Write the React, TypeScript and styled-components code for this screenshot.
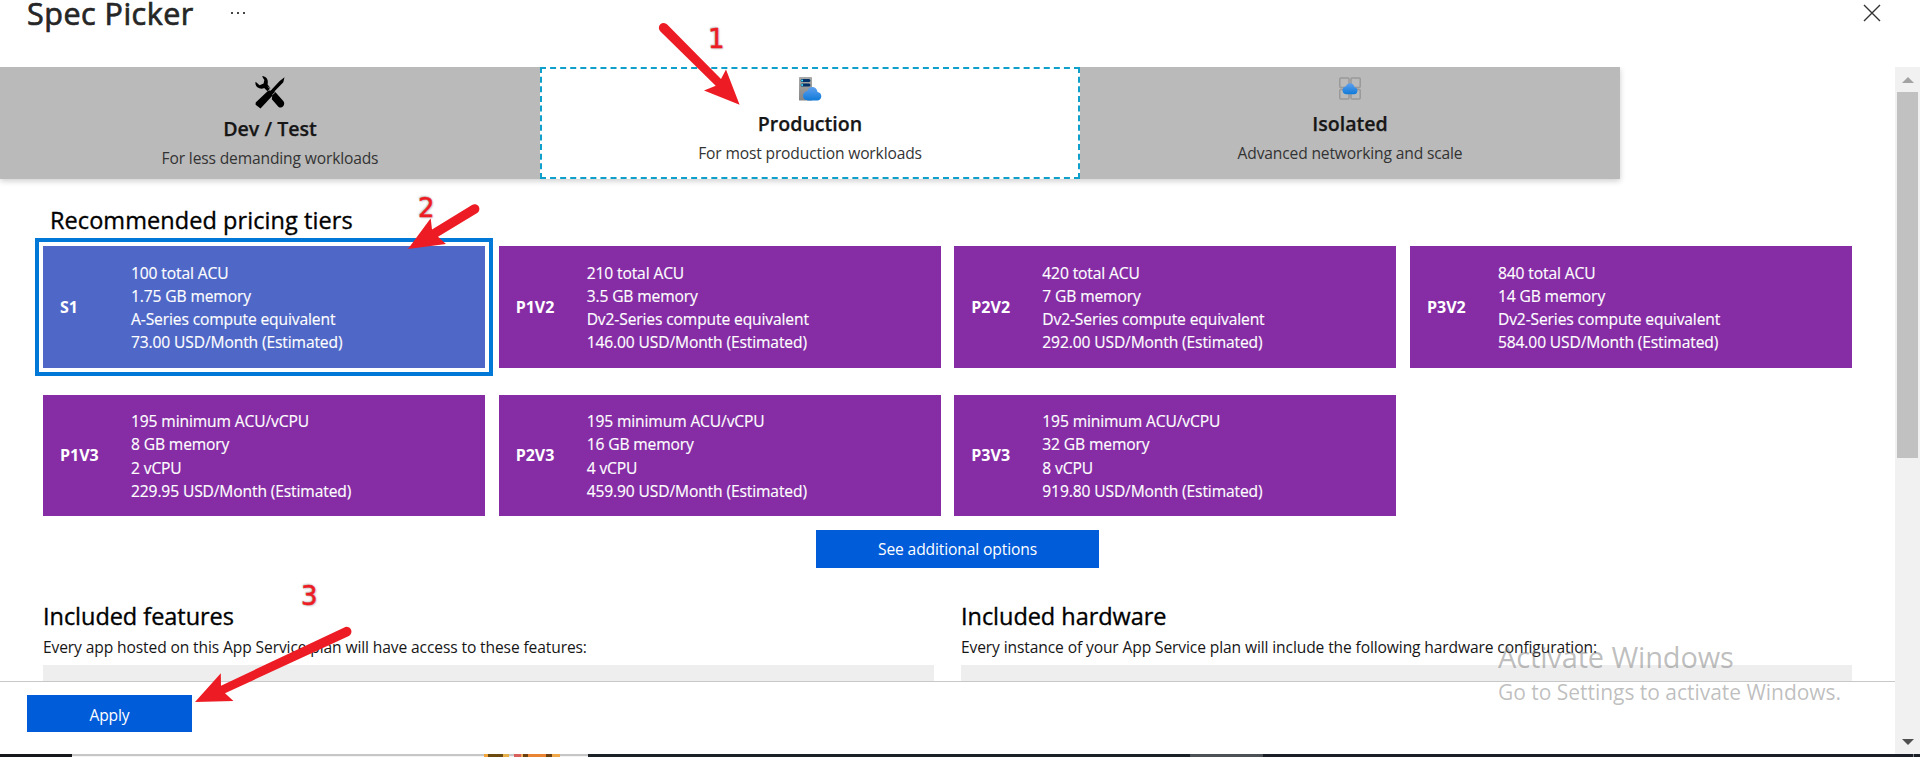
import React from 'react';
import styled, { createGlobalStyle } from 'styled-components';

const GlobalStyle = createGlobalStyle`
  * { box-sizing: border-box; }
  body {
    margin: 0;
    overflow: hidden;
    background: #fff;
    color: #161616;
    font-family: "Open Sans", "Noto Sans", sans-serif;
    font-size: 15.6px;
    letter-spacing: -0.12px;
  }
`;

const Page = styled.div`
  position: relative;
  display: flex;
  flex-direction: column;
  width: 1920px;
  height: 757px;
  overflow: hidden;
`;

const Header = styled.header`
  flex: none;
  display: flex;
  height: 67px;
  padding: 0 39px 0 27px;
`;

const Title = styled.h1`
  width: 167px;
  margin: -8px 0 0;
  white-space: nowrap;
  font-size: 30.5px;
  line-height: 42px;
  font-weight: 400;
  letter-spacing: 0.5px;
  -webkit-text-stroke: 0.7px #262626;
  color: #262626;
`;

const MoreDots = styled.svg`
  width: 15px;
  height: 2px;
  margin: 12px auto 0 36px;
  fill: #444;
`;

const CloseIcon = styled.svg`
  width: 18px;
  height: 18px;
  margin-top: 4px;
  stroke: #333;
  stroke-width: 1.4;
`;

const Body = styled.div`
  display: flex;
  flex: none;
  height: 687px;
`;

const Blade = styled.div`
  display: flex;
  flex-direction: column;
  width: 1895px;
`;

const Content = styled.main`
  flex: 1;
  min-height: 0;
  overflow: hidden;
`;

const Tabs = styled.div`
  display: grid;
  grid-template-columns: repeat(3, 540px);
  width: 1620px;
  height: 112px;
  box-shadow: 0 2px 6px rgba(0, 0, 0, 0.2);
`;

const Tab = styled.div<{ $active?: boolean }>`
  display: flex;
  flex-direction: column;
  align-items: center;
  padding-top: ${p => (p.$active ? 6 : 8)}px;
  background: ${p => (p.$active ? '#fff' : '#bababa')};
  border: ${p => (p.$active ? '2px dashed #0f9fcb' : 'none')};
`;

const TabIcon = styled.svg<{ $w: number; $h: number }>`
  flex: none;
  width: ${p => p.$w}px;
  height: ${p => p.$h}px;
  margin-bottom: 5px;
`;

const TabTitle = styled.div`
  font-size: 19.6px;
  line-height: 30px;
  font-weight: 600;
  letter-spacing: 0;
  -webkit-text-stroke: 0.25px #161616;
`;

const TabNote = styled.div`
  margin-top: 4px;
  line-height: 20px;
  letter-spacing: -0.15px;
  color: #333;
`;

const Heading = styled.h2<{ $indent?: boolean }>`
  margin: ${p => (p.$indent ? '25px 0 10px 50px' : '0')};
  font-size: 23.5px;
  line-height: 32px;
  font-weight: 400;
  letter-spacing: ${p => (p.$indent ? '0.07px' : '-0.04px')};
  -webkit-text-stroke: 0.35px #000;
  color: #000;
`;

const TierGrid = styled.div`
  display: grid;
  grid-template-columns: repeat(4, 442px);
  grid-template-rows: 122px 121px;
  justify-content: space-between;
  row-gap: 27px;
  margin: 0 43px;
`;

const TierCard = styled.div<{ $selected?: boolean }>`
  display: grid;
  grid-template-columns: 71px 1fr;
  align-items: center;
  padding-left: 17px;
  color: #fff;
  background: ${p => (p.$selected ? '#4f68c8' : '#862da6')};
  box-shadow: ${p => (p.$selected ? '0 0 0 4px #fff, 0 0 0 8px #0078d7' : 'none')};
`;

const TierName = styled.div`
  padding-bottom: 1px;
  font-size: 16px;
  font-weight: 700;
  letter-spacing: 0;
`;

const TierSpecs = styled.div`
  padding-top: 2px;
  line-height: 23.2px;
  -webkit-text-stroke: 0.15px #fff;
`;

const Button = styled.button`
  display: block;
  padding: 0;
  border: 0;
  background: #015cda;
  color: #fff;
  font: inherit;
  letter-spacing: inherit;
`;

const OptionsButton = styled(Button)`
  width: 283px;
  height: 38px;
  margin: 14px 0 32px 816px;
`;

const Included = styled.div`
  display: grid;
  grid-template-columns: 891px 891px;
  column-gap: 27px;
  margin-left: 43px;
`;

const IncludedText = styled.p`
  margin: 4px 0 7px;
  line-height: 22px;
`;

const IncludedPanel = styled.div`
  height: 60px;
  background: #eee;
`;

const Footer = styled.footer`
  flex: none;
  height: 73px;
  padding: 13px 27px;
  border-top: 1px solid #c8c8c8;
`;

const ApplyButton = styled(Button)`
  width: 165px;
  height: 37px;
  padding-top: 3px;
`;

const Scrollbar = styled.div`
  display: flex;
  flex-direction: column;
  align-items: center;
  width: 25px;
  background: #f1f1f1;
`;

const ScrollArrow = styled.svg<{ $down?: boolean }>`
  width: 12px;
  height: 6px;
  margin: ${p => (p.$down ? 'auto 0 9px' : '10px 0 9px')};
  fill: ${p => (p.$down ? '#505050' : '#a3a3a3')};
`;

const Thumb = styled.div`
  width: 21px;
  height: 366px;
  background: #c1c1c1;
`;

const Taskbar = styled.div`
  display: flex;
  height: 3px;
  background: #1b2028;
`;

const TaskSegment = styled.div<{ $w: number; $color: string }>`
  width: ${p => p.$w}px;
  background: ${p => p.$color};
`;

const SearchSegment = styled(TaskSegment)`
  display: flex;
  padding-left: 412px;
  gap: 5px;
  border-top: 2px solid #c6c6c6;
`;

const SearchArt = styled.div<{ $w: number; $fill: string }>`
  width: ${p => p.$w}px;
  margin-top: -2px;
  background: ${p => p.$fill};
`;

const Watermark = styled.div`
  position: absolute;
  left: 1498px;
  top: 640px;
  color: rgba(120, 120, 120, 0.48);
  white-space: nowrap;
`;

const WatermarkTitle = styled.div`
  font-size: 29px;
  line-height: 34px;
  letter-spacing: -0.14px;
`;

const WatermarkNote = styled.div`
  margin-top: 3px;
  font-size: 21px;
  line-height: 30px;
  letter-spacing: -0.03px;
`;

const Arrows = styled.svg`
  position: absolute;
  left: 0;
  top: 0;
  fill: #ed1c24;
  stroke: none;
`;

const StepNumber = styled.span<{ $x: number; $y: number }>`
  position: absolute;
  left: ${p => p.$x}px;
  top: ${p => p.$y}px;
  font: 26px/30px "DejaVu Sans", sans-serif;
  color: #ed1c24;
  -webkit-text-stroke: 0.5px #ed1c24;
  text-shadow: 0 0 2px #bbb, 1px 1px 2px #ccc, -1px -1px 2px #ccc;
`;

const tiers = [
  { name: 'S1', specs: ['100 total ACU', '1.75 GB memory', 'A-Series compute equivalent', '73.00 USD/Month (Estimated)'], selected: true },
  { name: 'P1V2', specs: ['210 total ACU', '3.5 GB memory', 'Dv2-Series compute equivalent', '146.00 USD/Month (Estimated)'] },
  { name: 'P2V2', specs: ['420 total ACU', '7 GB memory', 'Dv2-Series compute equivalent', '292.00 USD/Month (Estimated)'] },
  { name: 'P3V2', specs: ['840 total ACU', '14 GB memory', 'Dv2-Series compute equivalent', '584.00 USD/Month (Estimated)'] },
  { name: 'P1V3', specs: ['195 minimum ACU/vCPU', '8 GB memory', '2 vCPU', '229.95 USD/Month (Estimated)'] },
  { name: 'P2V3', specs: ['195 minimum ACU/vCPU', '16 GB memory', '4 vCPU', '459.90 USD/Month (Estimated)'] },
  { name: 'P3V3', specs: ['195 minimum ACU/vCPU', '32 GB memory', '8 vCPU', '919.80 USD/Month (Estimated)'] },
];

const ToolsIcon = () => (
  <TabIcon $w={30} $h={34} viewBox="0 0 30 34">
    <path d="M7 1.2C10.500 1 13.200 3.800 12.800 7.500L12.600 9.600L15.500 13.200L12.400 16.300L9.200 13.100C5.500 14.800 .6 12.500 .4 8.300L.6 6.800L4.600 10.200L8.600 8.500L9.300 5Z" />
    <path d="M17.300 17.800L19.600 16.300L28.300 26C31 29.500 27.200 34.300 23.600 31.900L16.800 24.200L17.200 21Z" />
    <path d="M29.500 2.200L28.300 7.300L18.600 17.200C18.800 18.500 18 20.500 16.700 21.500L5.500 33.600L.6 29.800L.7 27.600L11.500 17.300C12.700 15.800 14 15.400 15.500 15.700L24.700 6Z" />
    <path d="M13.200 11.700L16.300 15M17.300 19.800L20.500 16.900" stroke="#bababa" strokeWidth=".8" />
  </TabIcon>
);

const ServerIcon = () => (
  <TabIcon $w={24} $h={29} viewBox="0 0 24 29">
    <defs>
      <linearGradient id="server" x2="0" y2="1"><stop stopColor="#a9a9a9" /><stop offset="1" stopColor="#858585" /></linearGradient>
      <linearGradient id="cloud" x2="0" y2="1"><stop stopColor="#5ea0ef" /><stop offset="1" stopColor="#0f7ad8" /></linearGradient>
    </defs>
    <rect x="1" y="2" width="13" height="23.500" rx=".6" fill="url(#server)" />
    <rect x="2.600" y="4" width="9.800" height="3" rx="1.500" fill="#003067" />
    <rect x="2.600" y="8.400" width="9.800" height="3" rx="1.500" fill="#003067" />
    <circle cx="4.100" cy="5.500" r="1" fill="#50e6ff" />
    <circle cx="4.100" cy="9.900" r="1" fill="#50e6ff" />
    <path d="M23.300 21.200C23.300 18.900 21.700 17.200 19.500 17C19.200 14.200 17.200 12 14.300 12C12 12 10 13.500 9.300 15.900C6.700 16.300 5 18.300 5 20.800C5 23.700 7.300 25.500 10 25.500H19.200C21.600 25.400 23.300 23.500 23.300 21.200Z" fill="url(#cloud)" />
  </TabIcon>
);

const IsolatedIcon = () => (
  <TabIcon $w={22} $h={29} viewBox="0 0 22 29">
    <g fill="none" stroke="#999" strokeWidth="1.500">
      <rect x=".8" y="3" width="9.200" height="9.600" rx="1" />
      <rect x="12" y="3" width="9.200" height="9.600" rx="1" />
      <rect x=".8" y="14.500" width="9.200" height="9.600" rx="1" />
      <rect x="12" y="14.500" width="9.200" height="9.600" rx="1" />
    </g>
    <path d="M18.500 15.800C18.500 13.900 17.200 12.500 15.500 12.300C15.200 9.900 13.500 8.200 11.200 8.200C9.200 8.200 7.600 9.400 7 11.300C5 11.600 3.500 13.200 3.500 15.400C3.500 17.700 5.300 19.300 7.500 19.300H15.300C17.100 19.200 18.500 17.700 18.500 15.800Z" fill="url(#cloud)" />
  </TabIcon>
);

export default function App() {
  return (
    <Page>
      <GlobalStyle />
      <Header>
        <Title>Spec Picker</Title>
        <MoreDots viewBox="0 0 15 2">
          <rect x="1" width="2" height="2" /><rect x="7" width="2" height="2" /><rect x="13" width="2" height="2" />
        </MoreDots>
        <CloseIcon viewBox="0 0 18 18"><path d="M1 1L17 17M17 1L1 17" /></CloseIcon>
      </Header>
      <Body>
        <Blade>
          <Content>
            <Tabs>
              <Tab>
                <ToolsIcon />
                <TabTitle>Dev / Test</TabTitle>
                <TabNote>For less demanding workloads</TabNote>
              </Tab>
              <Tab $active>
                <ServerIcon />
                <TabTitle>Production</TabTitle>
                <TabNote>For most production workloads</TabNote>
              </Tab>
              <Tab>
                <IsolatedIcon />
                <TabTitle>Isolated</TabTitle>
                <TabNote>Advanced networking and scale</TabNote>
              </Tab>
            </Tabs>
            <Heading $indent>Recommended pricing tiers</Heading>
            <TierGrid>
              {tiers.map(t => (
                <TierCard key={t.name} $selected={t.selected}>
                  <TierName>{t.name}</TierName>
                  <TierSpecs>{t.specs.map(s => <div key={s}>{s}</div>)}</TierSpecs>
                </TierCard>
              ))}
            </TierGrid>
            <OptionsButton>See additional options</OptionsButton>
            <Included>
              <section>
                <Heading>Included features</Heading>
                <IncludedText>Every app hosted on this App Service plan will have access to these features:</IncludedText>
                <IncludedPanel />
              </section>
              <section>
                <Heading>Included hardware</Heading>
                <IncludedText>Every instance of your App Service plan will include the following hardware configuration:</IncludedText>
                <IncludedPanel />
              </section>
            </Included>
          </Content>
          <Footer><ApplyButton>Apply</ApplyButton></Footer>
        </Blade>
        <Scrollbar>
          <ScrollArrow viewBox="0 0 12 6"><path d="M0 6L6 0L12 6Z" /></ScrollArrow>
          <Thumb />
          <ScrollArrow $down viewBox="0 0 12 6"><path d="M0 0L6 6L12 0Z" /></ScrollArrow>
        </Scrollbar>
      </Body>
      <Taskbar>
        <TaskSegment $w={72} $color="#15171b" />
        <SearchSegment $w={516} $color="#f3f3f3">
          <SearchArt $w={25} $fill="linear-gradient(90deg, #f2a43a 4px, #6b4a10 4px 19px, #e8b04a 19px)" />
          <SearchArt $w={46} $fill="linear-gradient(90deg, #d9605a 7px, #f0b060 7px 9px, #6b3f10 9px 14px, #e88432 14px 32px, #6b3f10 32px 38px, #f0a848 38px)" />
        </SearchSegment>
        <TaskSegment $w={602} $color="#1a2127" />
        <TaskSegment $w={73} $color="#4b5155" />
        <TaskSegment $w={650} $color="#1a1e26" />
        <TaskSegment $w={1} $color="#7c7f84" />
      </Taskbar>

      <Watermark>
        <WatermarkTitle>Activate Windows</WatermarkTitle>
        <WatermarkNote>Go to Settings to activate Windows.</WatermarkNote>
      </Watermark>

      <Arrows width="1920" height="757" viewBox="0 0 1920 757">
        <path d="M660.200 31.200A4.800 4.800 0 0 1 667.200 24.500L721 79L726 69.500L739.600 104.700L704 90.500L715.700 85.700Z" />
        <path d="M472 204.900A4.800 4.800 0 0 1 477.200 213L438 236.700L446 244L408 249L430.700 218.300L432 229.500Z" />
        <path d="M344.300 627.400A4.800 4.800 0 0 1 348.900 635.900L225 693.300L233.500 701L195 702L220.800 673.300L221 685.700Z" />
      </Arrows>
      <StepNumber $x={708} $y={24}>1</StepNumber>
      <StepNumber $x={418} $y={193}>2</StepNumber>
      <StepNumber $x={301} $y={581}>3</StepNumber>
    </Page>
  );
}
